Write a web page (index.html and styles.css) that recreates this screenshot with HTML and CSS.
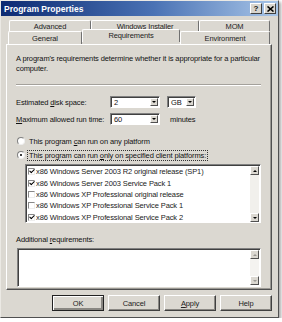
FILE: index.html
```html
<!DOCTYPE html>
<html lang="en">
<head>
  <meta charset="UTF-8">
  <title>Program Properties</title>
  <link rel="stylesheet" href="styles.css">
</head>
<body>
  <div class="window">
    <div class="titlebar">
      <span class="title">Program Properties</span>
      <span class="tb-btn">?</span>
      <span class="tb-btn">
        <svg width="7" height="6" viewBox="0 0 7 6"><path d="M0.5 0.5 L6.5 5.5 M6.5 0.5 L0.5 5.5" stroke="#000" stroke-width="1.6"/></svg>
      </span>
    </div>

    <div class="tabs">
      <div class="tab-row back">
        <div class="tab w-adv">Advanced</div>
        <div class="tab w-win">Windows Installer</div>
        <div class="tab w-mom">MOM</div>
      </div>
      <div class="tab-row front">
        <div class="tab w-gen">General</div>
        <div class="tab w-req active">Requirements</div>
        <div class="tab w-env">Environment</div>
      </div>
    </div>

    <div class="panel">
      <p class="intro">A program's requirements determine whether it is appropriate for a particular computer.</p>
      <div class="sep"></div>

      <div class="field">
        <span class="field-label">Estimated <u>d</u>isk space:</span>
        <span class="combo w-size"><span class="combo-val">2</span><span class="drop"></span></span>
        <span class="combo w-unit"><span class="combo-val">GB</span><span class="drop"></span></span>
      </div>
      <div class="field">
        <span class="field-label"><u>M</u>aximum allowed run time:</span>
        <span class="combo w-size"><span class="combo-val">60</span><span class="drop"></span></span>
        <span class="unit">minutes</span>
      </div>

      <label class="radio-row"><span class="radio"></span><span>This program <u>c</u>an run on any platform</span></label>
      <label class="radio-row"><span class="radio on"></span><span class="focus">This program can run <u>o</u>nly on specified client platforms:</span></label>

      <div class="listbox">
        <div class="list-items">
          <div class="item"><span class="check on"></span>x86 Windows Server 2003 R2 original release (SP1)</div>
          <div class="item"><span class="check on"></span>x86 Windows Server 2003 Service Pack 1</div>
          <div class="item"><span class="check"></span>x86 Windows XP Professional original release</div>
          <div class="item"><span class="check"></span>x86 Windows XP Professional Service Pack 1</div>
          <div class="item"><span class="check on"></span>x86 Windows XP Professional Service Pack 2</div>
        </div>
        <div class="vscroll">
          <span class="arrow up"></span>
          <span class="track"></span>
          <span class="arrow down"></span>
        </div>
      </div>

      <div class="extra-label">Additional <u>r</u>equirements:</div>
      <div class="textbox">
        <div class="text-area"></div>
        <div class="vscroll off">
          <span class="arrow up"></span>
          <span class="track"></span>
          <span class="arrow down"></span>
        </div>
      </div>
    </div>

    <div class="buttons">
      <span class="btn default">OK</span>
      <span class="btn">Cancel</span>
      <span class="btn"><u>A</u>pply</span>
      <span class="btn">Help</span>
    </div>
  </div>
</body>
</html>
```

FILE: styles.css
```css
body {
  margin: 0;
  background: #fff;
  font-family: 'Liberation Sans', Arial, sans-serif;
  font-size: 7.5px;
  letter-spacing: -0.12px;
  color: #111;
}
u {
  text-decoration: underline;
  text-underline-offset: 1px;
}
.window {
  width: 279px;
  height: 318px;
  box-sizing: border-box;
  background: #dbd8d1;
  border: 1px solid;
  border-color: #ebe9e4 #505050 #505050 #ebe9e4;
  box-shadow: 2px 2px 3px rgba(0,0,0,0.35);
  display: flex;
  flex-direction: column;
}
.titlebar {
  height: 15px;
  padding: 0 2px 0 3px;
  background: linear-gradient(to right, #0c2a72, #4a72b4 55%, #a9c6e8);
  display: flex;
  align-items: center;
  gap: 1px;
}
.title {
  flex: 1;
  color: #fff;
  font-weight: bold;
  font-size: 8.5px;
  letter-spacing: 0;
}
.tb-btn {
  width: 10px;
  height: 9px;
  background: #d8d5ce;
  border: 1px solid;
  border-color: #fff #404040 #404040 #fff;
  display: flex;
  align-items: center;
  justify-content: center;
  font-weight: bold;
  font-size: 8px;
}
.tb-btn + .tb-btn {
  margin-left: 1px;
}

/* tabs */
.tabs {
  padding: 4px 0 0 7px;
}
.tab-row {
  display: flex;
}
.tab-row.back {
  margin-left: 1px;
}
.tab {
  box-sizing: border-box;
  height: 11px;
  border: 1px solid;
  border-color: #fff #707070 transparent #fff;
  border-bottom: none;
  border-radius: 2px 2px 0 0;
  display: flex;
  align-items: center;
  justify-content: center;
  color: #222;
}
.tab-row.front .tab {
  height: 13px;
}
.tab.active {
  height: 15px;
  margin-top: -2px;
  margin-bottom: -1px;
  position: relative;
  background: #dbd8d1;
  padding-bottom: 2px;
}
.w-adv { width: 82px; }
.w-win { width: 108px; }
.w-mom { width: 71px; }
.w-gen { width: 74px; }
.w-req { width: 98px; }
.w-env { width: 90px; }

/* panel */
.panel {
  margin-left: 5px;
  width: 266px;
  height: 246px;
  box-sizing: border-box;
  border: 1px solid;
  border-color: #fff #505050 #505050 #fff;
  box-shadow: inset -1px -1px 0 #9a9893;
  padding: 9px 9px 0 9px;
}
.intro {
  margin: 0;
  line-height: 10px;
  width: 250px;
}
.sep {
  margin: 10px 0 10px 0;
  height: 0;
  border-top: 1px solid #a4a19b;
  border-bottom: 1px solid #fff;
  width: 245px;
}
.field {
  display: flex;
  align-items: center;
  height: 12px;
  margin-bottom: 5px;
  white-space: nowrap;
}
.field-label {
  width: 94px;
}
.combo {
  box-sizing: border-box;
  height: 12px;
  background: #fff;
  border: 1px solid;
  border-color: #808080 #fff #fff #808080;
  box-shadow: inset 1px 1px 0 #404040;
  display: flex;
  align-items: center;
  padding: 1px 1px 1px 3px;
}
.combo-val {
  flex: 1;
}
.w-size { width: 50px; }
.w-unit { width: 29px; margin-left: 7px; }
.drop {
  width: 8px;
  height: 8px;
  box-sizing: border-box;
  background: #dbd8d1;
  border: 1px solid;
  border-color: #fff #505050 #505050 #fff;
  display: flex;
  align-items: center;
  justify-content: center;
}
.drop::after,
.arrow::after {
  content: '';
  border-left: 2px solid transparent;
  border-right: 2px solid transparent;
  border-top: 2px solid #000;
}
.unit {
  margin-left: 10px;
}
.radio-row {
  display: flex;
  align-items: center;
  height: 12px;
  margin-left: 1px;
  margin-top: 2px;
  white-space: nowrap;
}
.field + .radio-row {
  margin-top: 10px;
}
.radio {
  width: 8px;
  height: 8px;
  box-sizing: border-box;
  border-radius: 50%;
  background: #fff;
  border: 1px solid;
  border-color: #808080 #eee #eee #808080;
  margin-right: 4px;
  display: flex;
  align-items: center;
  justify-content: center;
}
.radio.on::after {
  content: '';
  width: 2px;
  height: 2px;
  border-radius: 50%;
  background: #000;
}
.focus {
  outline: 1px dotted #333;
  outline-offset: 0;
  padding: 0 1px;
  margin-left: -1px;
}
.listbox {
  margin: 3px 0 0 9px;
  width: 236px;
  height: 59px;
  box-sizing: border-box;
  background: #fff;
  border: 1px solid;
  border-color: #808080 #fff #fff #808080;
  box-shadow: inset 1px 1px 0 #404040;
  display: flex;
  padding: 1px 1px 0 1px;
}
.list-items {
  flex: 1;
  padding-left: 1px;
}
.item {
  display: flex;
  align-items: center;
  height: 11.4px;
  white-space: nowrap;
  color: #222;
}
.check {
  width: 7px;
  height: 7px;
  box-sizing: border-box;
  border: 1px solid;
  border-color: #888 #eee #eee #888;
  margin-right: 1px;
  display: flex;
  align-items: center;
  justify-content: center;
}
.check.on::after {
  content: '';
  width: 4px;
  height: 2px;
  border-left: 1.5px solid #000;
  border-bottom: 1.5px solid #000;
  transform: translate(0.5px, -1px) rotate(-45deg);
}
.vscroll {
  width: 9px;
  display: flex;
  flex-direction: column;
}
.arrow {
  height: 9px;
  box-sizing: border-box;
  background: #dbd8d1;
  border: 1px solid;
  border-color: #fff #505050 #505050 #fff;
  display: flex;
  align-items: center;
  justify-content: center;
}
.arrow.up::after {
  border-top: none;
  border-bottom: 2px solid #000;
}
.track {
  flex: 1;
  background: #f1f0ec;
}
.vscroll.off .arrow::after {
  border-top-color: #9a9893;
  border-bottom-color: #9a9893;
}
.vscroll.off .track {
  background: #f4f3f0;
}
.extra-label {
  margin-top: 12px;
  height: 10px;
}
.textbox {
  margin: 3px 0 0 1px;
  width: 244px;
  height: 39px;
  box-sizing: border-box;
  background: #fff;
  border: 1px solid;
  border-color: #808080 #fff #fff #808080;
  box-shadow: inset 1px 1px 0 #404040;
  display: flex;
  padding: 1px;
}
.text-area {
  flex: 1;
}

/* bottom buttons */
.buttons {
  display: flex;
  justify-content: flex-end;
  gap: 4px;
  padding: 5px 6px 0 0;
}
.btn {
  box-sizing: border-box;
  width: 52px;
  height: 16px;
  background: #dbd8d1;
  border: 1px solid;
  border-color: #fff #404040 #404040 #fff;
  box-shadow: inset -1px -1px 0 #8a8883;
  display: flex;
  align-items: center;
  justify-content: center;
  color: #222;
}
.btn.default {
  border-color: #222;
  box-shadow: inset 1px 1px 0 #fff, inset -2px -2px 0 #8a8883;
}
```
